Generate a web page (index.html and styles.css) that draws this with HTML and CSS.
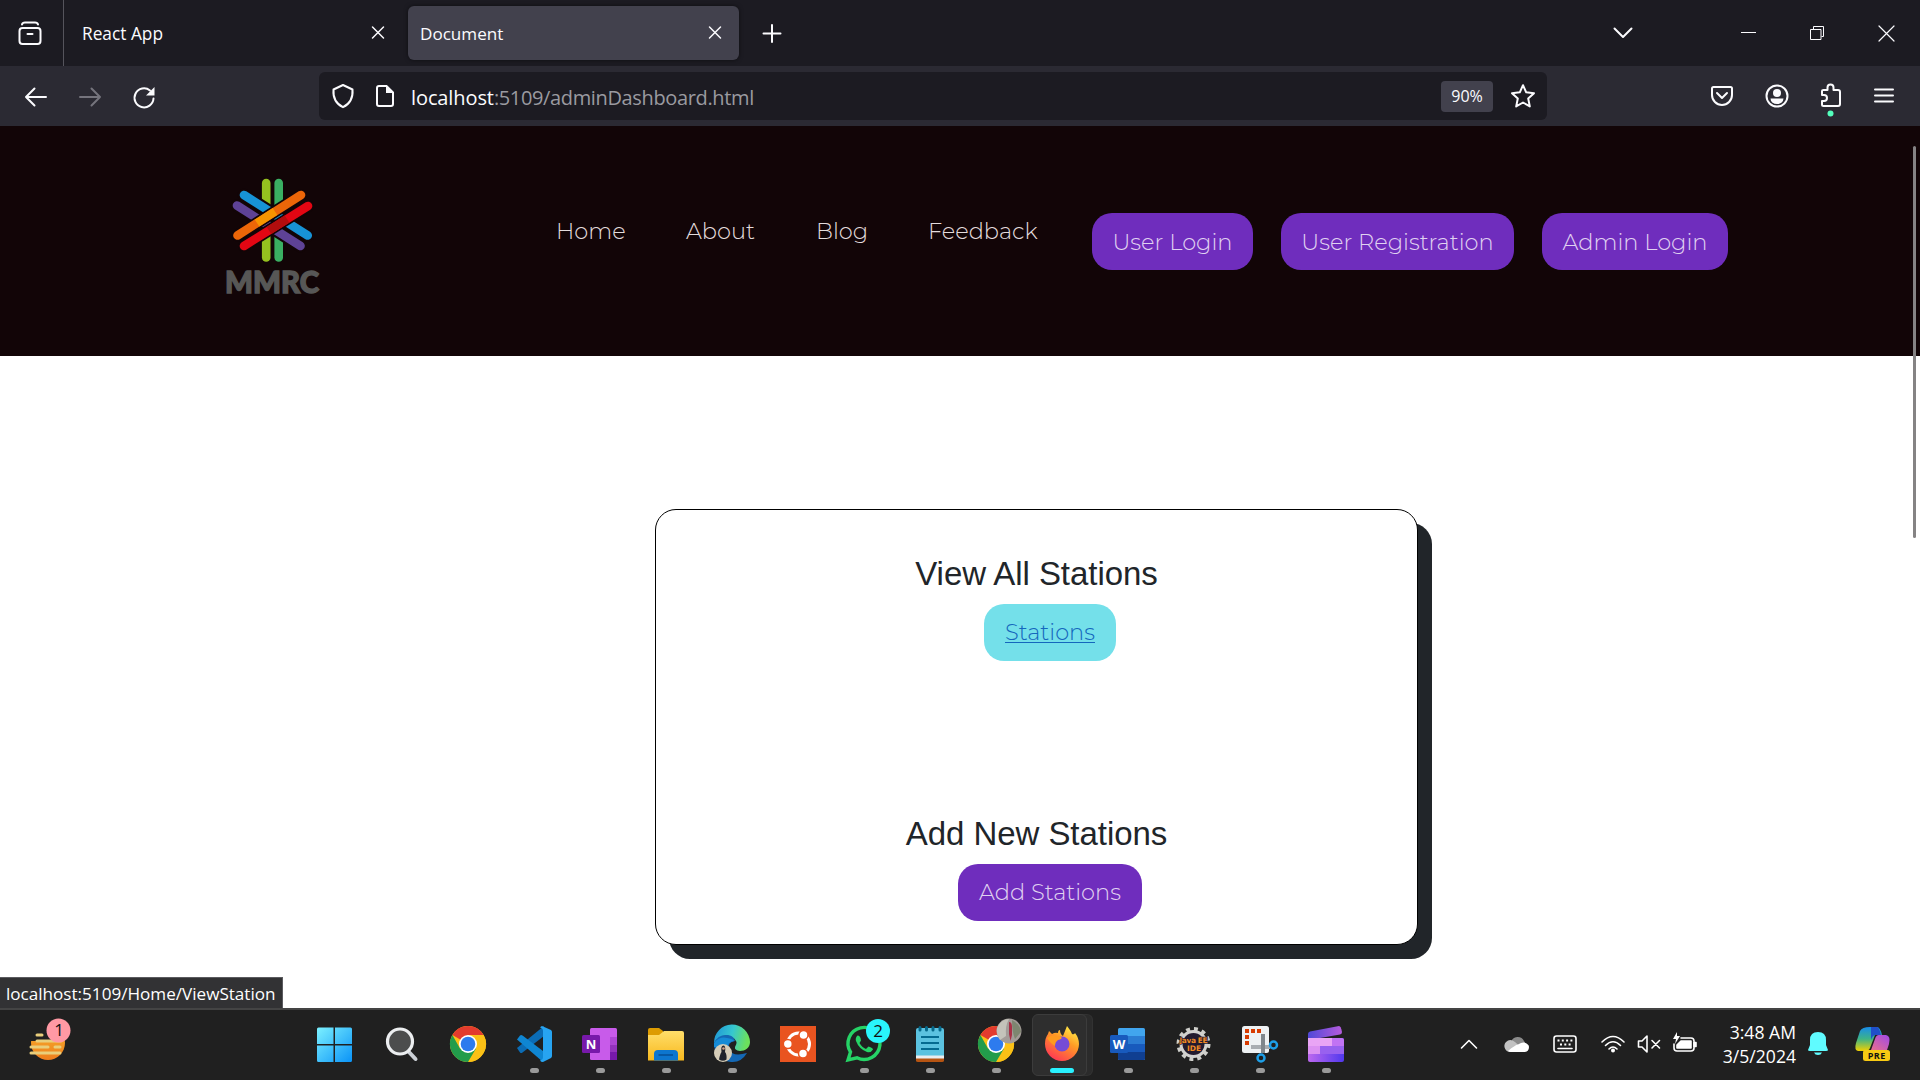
FILE: index.html
```html
<!DOCTYPE html>
<html lang="en">
<head>
<meta charset="utf-8">
<title>Document</title>
<link rel="stylesheet" href="styles.css">
</head>
<body>
<div class="tabstrip">
  <div class="view-btn">
    <svg width="26" height="26" viewBox="0 0 26 26" class="line"><path d="M5 5.500Q5.500 3.500 8 3.500H18Q20.500 3.500 21 5.500"/><rect x="2.500" y="9" width="21" height="16" rx="3"/><path d="M10.500 15h5"/></svg>
  </div>
  <div class="tab"><span>React App</span><svg width="14" height="14" viewBox="0 0 14 14" class="line thin"><path d="M1.500 1L12.500 12M12.500 1L1.500 12"/></svg></div>
  <div class="tab active"><span>Document</span><svg width="14" height="14" viewBox="0 0 14 14" class="line thin"><path d="M1.500 1L12.500 12M12.500 1L1.500 12"/></svg></div>
  <svg class="line plus" width="20" height="20" viewBox="0 0 20 20"><path d="M10 2V19M1.500 10.500H18.500"/></svg>
  <div class="window-controls">
    <svg width="20" height="12" viewBox="0 0 20 12" class="line"><path d="M1.500 1.500L10 10L18.500 1.500"/></svg>
    <svg width="16" height="16" viewBox="0 0 16 16" class="line hair"><path d="M0 7.500H15"/></svg>
    <svg width="16" height="16" viewBox="0 0 16 16" class="line hair"><path d="M.5 4.500h10.500v10h-10.500zM3.500 4V1.500H13.500V11.500H11.500"/></svg>
    <svg width="17" height="17" viewBox="0 0 17 17" class="line hair2"><path d="M1 1L16 16M16 1L1 16"/></svg>
  </div>
</div>
<div class="toolbar">
  <div class="nav-icons">
    <svg width="24" height="24" viewBox="0 0 24 24" class="line"><path d="M22 12H2M10.500 3.500L2 12L10.500 20.500"/></svg>
    <svg width="24" height="24" viewBox="0 0 24 24" class="line dim"><path d="M2 12H22M13.500 3.500L22 12L13.500 20.500"/></svg>
    <svg width="24" height="24" viewBox="0 0 24 24" class="line"><path d="M21.500 13.500A9.500 9.500 0 1 1 18 5.500"/><path d="M14 10.500H22.500V2Z" fill="#fbfbfe" stroke="none"/></svg>
  </div>
  <div class="urlbar">
    <svg width="24" height="26" viewBox="0 0 24 26" class="line"><path d="M12 2L21.500 6.500Q22.500 19 12 24.200Q1.500 19 2.500 6.500Z"/></svg>
    <svg class="page-icon" width="20" height="24" viewBox="0 0 20 24"><path d="M4 2H11.500L18 8.500V20Q18 22 16 22H4Q2 22 2 20V4Q2 2 4 2Z" fill="none" stroke="#fbfbfe" stroke-width="2"/><path d="M11 2V9H18Z" fill="#fbfbfe"/></svg>
    <span class="url"><b>localhost</b><span class="path">:5109/adminDashboard.html</span></span>
    <span class="zoom">90%</span>
    <svg width="26" height="26" viewBox="0 0 26 26" class="line"><path d="M13 2.200L16.200 9.300L24 10.200L18.200 15.500L19.800 23.400L13 19.500L6.200 23.400L7.800 15.500L2 10.200L9.800 9.300Z"/></svg>
  </div>
  <div class="tools">
    <svg width="24" height="22" viewBox="0 0 24 22" class="line"><path d="M3.500 2H20.500Q22 2 22 3.500V10A10 10 0 0 1 2 10V3.500Q2 2 3.500 2Z"/><path d="M7 8L12 13L17 8"/></svg>
    <svg width="24" height="24" viewBox="0 0 24 24" class="line"><circle cx="12" cy="12" r="10.500"/><g fill="#fbfbfe" stroke="none"><circle cx="12" cy="9" r="4"/><path d="M5.500 14.500H18.500A6.500 5.500 0 0 1 5.500 14.500Z"/></g></svg>
    <svg width="24" height="34" viewBox="0 0 24 34" class="line"><path d="M3 10V8Q3 7 4.500 7H8.500V4.500A3 3 0 0 1 14.500 4.500V7H19Q21 7 21 9V21Q21 23 19 23H4.500Q3 23 3 21.500V18H5A3 3 0 0 0 5 12H3Z"/><circle cx="11.500" cy="30.500" r="3" fill="#54ffbd" stroke="none"/></svg>
    <svg width="20" height="16" viewBox="0 0 20 16" class="line"><path d="M1 1.500H19M1 7.500H19M1 13.500H19"/></svg>
  </div>
</div>
<main class="page">
  <header class="site-header">
    <svg class="logo" width="98" height="120" viewBox="0 0 98 120">
      <g fill="none" stroke-width="8.600" stroke-linecap="round" transform="translate(-1 0)">
        <path d="M42.200 9V83.500" stroke="#95c11f"/><path d="M54.700 9V83.500" stroke="#3aaf62"/>
        <path d="M20 21L83.700 61.500" stroke="#120507" stroke-width="13"/><path d="M13 31.500L76.500 72" stroke="#120507" stroke-width="13"/>
        <path d="M20 21L83.700 61.500" stroke="#1793d6"/><path d="M13 31.500L76.500 72" stroke="#5e4296"/>
        <path d="M13.500 61.500L77 21" stroke="#120507" stroke-width="12"/><path d="M20 72L84 32" stroke="#120507" stroke-width="12"/>
        <path d="M13.500 61.500L77 21" stroke="#ec6608"/><path d="M20 72L84 32" stroke="#e30613"/>
        <path d="M33 49L51 37.500" stroke="#f79400" stroke-linecap="butt"/><path d="M45 56.500L63 45" stroke="#b20d0d" stroke-linecap="butt"/>
      </g>
      <text x="0" y="118.500" textLength="94" lengthAdjust="spacingAndGlyphs" class="logo-text">MMRC</text>
    </svg>
    <nav class="site-nav">
      <a>Home</a><a>About</a><a>Blog</a><a>Feedback</a>
    </nav>
    <div class="logins">
      <a class="btn b1">User Login</a><a class="btn b2">User Registration</a><a class="btn b3">Admin Login</a>
    </div>
  </header>
  <section class="card">
    <div class="group"><h2>View All Stations</h2><a class="btn stations">Stations</a></div>
    <div class="group"><h2>Add New Stations</h2><a class="btn add">Add Stations</a></div>
  </section>
  <div class="scrollbar"></div>
  <div class="status">localhost:5109/Home/ViewStation</div>
</main>
<footer class="taskbar">
  <svg class="weather" width="44" height="48" viewBox="0 0 44 48">
    <defs><linearGradient id="w" x2="0" y2="1"><stop stop-color="#f7b52e"/><stop offset="1" stop-color="#ee7d1d"/></linearGradient></defs>
    <circle cx="20" cy="26" r="17" fill="url(#w)"/><path d="M0 0H38V16L22 24H0Z" fill="#202020"/>
    <g stroke="#e9ce7b" stroke-width="3" stroke-linecap="round"><path d="M9 18H14M9 24H33M3 30H20M27 30H32M3 36H32"/></g>
    <circle cx="30.500" cy="13.500" r="12" fill="#ff99a4"/><text x="31" y="19.300" text-anchor="middle" class="badge-text">1</text>
  </svg>
  <div class="apps">
    <div class="app nodot"><svg viewBox="0 0 36 36"><defs><linearGradient id="win" x2="1" y2="1"><stop stop-color="#7cf1ff"/><stop offset="1" stop-color="#0a93f7"/></linearGradient></defs><path fill="url(#win)" d="M-1 3q0-1.500 1.500-1.500H15.500V18H-1zM17 1.500H32.500Q34 1.500 34 3V18H17zM-1 19.500H15.500V36H.5Q-1 36-1 34.500zM17 19.500H34V34.500Q34 36 32.500 36H17z"/></svg></div>
    <div class="app nodot"><svg viewBox="0 0 36 36"><path d="M24 25L31.500 33" stroke="#ccd0d6" stroke-width="4" stroke-linecap="round"/><circle cx="16" cy="15.500" r="12.500" fill="#4c4d4d" stroke="#eceef0" stroke-width="3.200"/></svg></div>
    <div class="app nodot"><svg viewBox="0 0 36 36"><g id="chrome"><circle cx="18" cy="18" r="18" fill="#fbc116"/><path d="M18 18L2.400 9A18 18 0 0 1 33.600 9Z" fill="#e33b2e"/><path d="M18 9H33.600A18 18 0 0 1 18 36L26 22Z" fill="#fbc116"/><path d="M2.400 9A18 18 0 0 0 18 36L26 22.500L10 22.500Z" fill="#229c4b"/><circle cx="18" cy="18" r="9" fill="#fff"/><circle cx="18" cy="18" r="7.300" fill="#2d7bee"/></g></svg></div>
    <div class="app"><svg viewBox="0 0 36 36"><path d="M1 22L4 26.500Q5 27.500 6.500 26.500L28 10V0Z" fill="#0b6cb5"/><path d="M1 13.500L4 9.500Q5 8.500 6.500 9.500L27 25V36Z" fill="#0f86d2"/><path d="M26 0L35 4Q36 5 36 6V30Q36 31 35 32L27 36Q25 36 24 34.500Q27 34 27 31V5Q27 2 24 1.500Q25 0 26 0Z" fill="#27a4f1"/></svg></div>
    <div class="app"><svg viewBox="0 0 36 36"><rect x="8" y="2" width="27" height="32" rx="1.500" fill="#c85bea"/><path d="M28 11H35V19H28z" fill="#ad46d4"/><path d="M28 19H35V26H28z" fill="#9333bd"/><path d="M28 26H35V34H28z" fill="#7719aa"/><rect y="9" width="18" height="18" rx="1.500" fill="#7719aa"/><text x="9" y="22.500" text-anchor="middle" class="office">N</text></svg></div>
    <div class="app"><svg viewBox="0 0 36 36"><defs><linearGradient id="f" x2="0" y2="1"><stop stop-color="#ffde6a"/><stop offset="1" stop-color="#f8b91e"/></linearGradient></defs><path d="M0 4Q0 2 2 2H11L15 5V12H0Z" fill="#dd9c02"/><path d="M0 9H11L16 5H34Q36 5 36 7V34.500H0Z" fill="url(#f)"/><path d="M6 34.500V28Q6 24 10 24H26Q30 24 30 28V34.500Z" fill="#0d76cf"/><path d="M10.500 29H25" stroke="#0755a0" stroke-width="1.800"/></svg></div>
    <div class="app"><svg viewBox="0 0 36 36"><defs><linearGradient id="e" x2="1" y2=".2"><stop stop-color="#1d93d8"/><stop offset=".55" stop-color="#36c7cf"/><stop offset="1" stop-color="#6ce05c"/></linearGradient></defs><path d="M0 17A18 18 0 0 1 36 16C36 22 31 25 26 25Q20 24 21 21Q25 15 18 11Q8 6 0 17Z" fill="url(#e)"/><path d="M0 17Q4 8 14 9Q20 10 21 15Q13 16 15 24Q19 31 33 27Q27 37 17 36Q0 34 0 17Z" fill="#1468b5"/><path d="M0 17Q6 10 13 12Q19 13 20 15Q13 16 14 22L0 21Z" fill="#168bd6"/><circle cx="9" cy="27" r="9" fill="#d6cdb8"/><path d="M5 33.500Q6 28 7.500 26Q6.500 19.500 9.500 19.500Q12 20 11 26Q13 28 12.500 33.500Q9 36 5 33.500Z" fill="#20232b"/><circle cx="9.500" cy="22.500" r="1.300" fill="#d0a089"/></svg></div>
    <div class="app nodot"><svg viewBox="0 0 36 36"><path d="M0 0H36V36H0Z" fill="#e95420"/><circle cx="18.500" cy="18" r="11" fill="none" stroke="#fff" stroke-width="3"/><g fill="#fff" stroke="#e95420" stroke-width="1.500"><circle cx="7.800" cy="18" r="4.500"/><circle cx="23.500" cy="9" r="4.500"/><circle cx="23" cy="27.500" r="4.500"/></g></svg></div>
    <div class="app"><svg viewBox="0 0 36 36"><path d="M2 34L4.500 26A16 16 0 1 1 11 31.800Z" fill="none" stroke="#25d366" stroke-width="3.400"/><path d="M11.500 9.500Q9 12 10 15Q13 23 21 26Q25 27 27 23.500Q27 22 22.500 20.500L20 23Q16 21.500 13.500 17L15 14.500Q14.500 9.500 11.500 9.500Z" fill="#25d366"/><circle cx="32" cy="5" r="12" fill="#29f5fc"/><text x="32" y="11" text-anchor="middle" class="badge-text">2</text></svg></div>
    <div class="app"><svg viewBox="0 0 36 36"><path d="M4 31H32V34.500Q32 36 30 36H6Q4 36 4 34.500Z" fill="#b65412"/><path d="M4 28H32V32.500H4Z" fill="#e9edf0"/><path d="M4 4Q4 2 6 2H30Q32 2 32 4V29.500H4Z" fill="#5bc2e0"/><path d="M9 11H27M9 17H27M9 23H27" stroke="#046b91" stroke-width="2"/><path d="M8 1.500V4M14.500 1.500V4M21 1.500V4M28 1.500V4" stroke="#05698b" stroke-width="3" stroke-linecap="round"/></svg></div>
    <div class="app"><svg viewBox="0 0 36 36"><use href="#chrome"/><circle cx="31" cy="5" r="12.500" fill="#a39c98"/><path d="M19 2Q23-7 31-7Q27 0 28 10L22 14Q18 8 19 2Z" fill="#c4c3ba"/><path d="M34-6Q42-2 43 6L37 13Q34 6 34-6Z" fill="#7d8670"/><path d="M31-4Q34-4 34 1L34 9L32.500 15L31 8Z" fill="#aa3147"/></svg></div>
    <div class="app current"><svg viewBox="0 0 36 36"><defs><linearGradient id="ff" x1=".8" y1="0" x2=".2" y2="1"><stop stop-color="#fff04a"/><stop offset=".4" stop-color="#ff9a25"/><stop offset="1" stop-color="#ff3058"/></linearGradient></defs><path d="M23 0Q27 5 28 8Q30 9 31 7Q35 12 35 18A17 17 0 0 1 1 18Q1 12 4 8L5 5L8 8Q11 6 14 7Q14 4 16 4Q16 8 19 10Q21 5 23 0Z" fill="url(#ff)"/><circle cx="18" cy="18" r="7.500" fill="#764bd6"/><path d="M3 12Q8 8 13 11Q17 10 18 12Q16 14 14 14Q11 16 11 20Q7 18 3 12Z" fill="#ff9a1f"/></svg></div>
    <div class="app"><svg viewBox="0 0 36 36"><rect x="8" y="2" width="27" height="32" rx="1.500" fill="#41a5ee"/><path d="M8 10H35V18H8z" fill="#2b7cd3"/><path d="M8 18H35V26H8z" fill="#185abd"/><path d="M8 26H35V32.500Q35 34 33.500 34H9.500Q8 34 8 32.500z" fill="#103f91"/><rect y="9" width="18" height="18" rx="1.500" fill="#185abd"/><text x="9" y="22.500" text-anchor="middle" class="office">W</text></svg></div>
    <div class="app"><svg viewBox="0 0 36 36"><circle cx="17.500" cy="18" r="15" fill="none" stroke="#cfcfcb" stroke-width="4" stroke-dasharray="3.900 3.954"/><circle cx="17.500" cy="18" r="12.500" fill="#221b2e" stroke="#d2d2cf" stroke-width="3"/><text x="17.500" y="16.500" text-anchor="middle" textLength="28" class="java">Java EE</text><text x="18" y="24.500" text-anchor="middle" class="java">IDE</text></svg></div>
    <div class="app"><svg viewBox="0 0 36 36"><rect width="27" height="27" rx="2.500" fill="#eef1f3"/><path d="M3 3h4v4h-4zM9 3h4v4h-4zM15 3h4v4h-4zM3 9h4v4h-4zM3 15h4v4h-4z" fill="#d83b01"/><path d="M9 21H28" stroke="#a9adb2" stroke-width="4"/><path d="M21 8V27" stroke="#7f868c" stroke-width="4"/><g fill="none" stroke="#1d9fe8" stroke-width="2.500"><circle cx="31.500" cy="19" r="3.500"/><circle cx="19" cy="32" r="3.500"/></g></svg></div>
    <div class="app"><svg viewBox="0 0 36 36"><defs><linearGradient id="c1" x2="1"><stop stop-color="#5048d8"/><stop offset="1" stop-color="#b55bdc"/></linearGradient><linearGradient id="c2" x2="1"><stop stop-color="#bd68ef"/><stop offset="1" stop-color="#5038ee"/></linearGradient></defs><path d="M0 8Q0 6 2 5.500L31 0Q33 0 34 6Q34 8 32 8.500L12 12H0Z" fill="url(#c1)"/><path d="M0 12H34Q36 12 36 14V34Q36 36 34 36H2Q0 36 0 34Z" fill="url(#c2)"/><path d="M0 12H24V20H0Z" fill="#e9a5f5"/><path d="M24 12H34Q36 12 36 14V20H24Z" fill="#c173f3"/><path d="M0 20H12V28H0Z" fill="#dc92f2"/><path d="M12 20H36V28H12Z" fill="#9861ef"/></svg></div>
  </div>
  <div class="tray">
    <svg width="18" height="12" viewBox="0 0 18 12" class="line tr"><path d="M1.500 10L9 2.500L16.500 10"/></svg>
    <svg width="24" height="24" viewBox="0 0 24 24"><path d="M6 10A7 7 0 0 1 19 9L22 14H4Z" fill="#8b8b8b"/><path d="M6 20A6 6 0 0 1 1 10Q5 6 10 10L20 19Z" fill="#c2c2c2"/><path d="M3 19Q10 13 13 12.500Q17 10 19 10.500Q24 12 24 15Q24 20 19 20H6Q4 20 3 19Z" fill="#fff"/></svg>
    <svg width="24" height="18" viewBox="0 0 24 18" class="line tr"><rect x="1" y="1" width="22" height="16" rx="2.500"/><path d="M4.500 5.500H20M7 9.500H18" stroke-linecap="butt" stroke-width="2" stroke-dasharray="2 2.300"/><path d="M5 13.500H19"/></svg>
    <svg width="24" height="24" viewBox="0 0 24 24" class="line tr"><path d="M1 10Q12-1 23 10M4.500 13.500Q12 6 19.500 13.500M8 17Q12 13 16 17"/><circle cx="12" cy="18.500" r="2" fill="#fff" stroke="none"/></svg>
    <svg width="24" height="20" viewBox="0 0 24 20" class="line tr"><path d="M1.500 7H5L10 2V18L5 13H1.500ZM15 6.500L22.500 14M22.500 6.500L15 14"/></svg>
    <svg width="26" height="24" viewBox="0 0 26 24" class="line tr"><path d="M9 6H19Q22 6 22 9V16Q22 19 19 19H5Q2 19 2 16V12"/><path d="M9 9H19V16H5V13ZM22 10.500H24V14.500H22Z" fill="#fff"/><path d="M5 0L1 7H4L3 12L8 4H5Z" fill="#fff" stroke="none"/></svg>
    <div class="clock"><span>3:48 AM</span><span>3/5/2024</span></div>
    <svg class="bell" width="20" height="24" viewBox="0 0 20 24"><path d="M10 0Q18 0 18 8V13L20 18Q20 19 18 19H2Q0 19 0 18L2 13V8Q2 0 10 0ZM6 20.500H14Q13 23 10 23Q7 23 6 20.500Z" fill="#60fbff"/></svg>
    <svg class="copilot" width="36" height="36" viewBox="0 0 36 36"><defs><linearGradient id="p1" x2="0" y2="1"><stop stop-color="#188cea"/><stop offset=".5" stop-color="#3eb486"/><stop offset="1" stop-color="#f3d000"/></linearGradient><linearGradient id="p2" x1="1" x2="0" y2="1"><stop stop-color="#a049e8"/><stop offset="1" stop-color="#ff7a70"/></linearGradient></defs><path d="M15 1H22Q25 1 27 9H20L15 22Q14 25 10 25H3Q-1 24 1 17L5 5Q7 1 15 1Z" fill="url(#p1)"/><path d="M16 1H22Q24 1 26 9H20Q17 10 16 14Z" fill="#204fc9"/><path d="M24 9H31Q36 10 34 18L31 27H8Q14 28 16 24L20 13Q21 9 24 9Z" fill="url(#p2)"/><rect x="8" y="24" width="27" height="11" rx="2.500" fill="#f8ca13"/><text x="21.800" y="33" text-anchor="middle" class="pre">PRE</text></svg>
  </div>
</footer>
</body>
</html>
```
FILE: styles.css
```css
* { box-sizing: border-box; }
body { margin: 0; width: 1920px; height: 1080px; overflow: hidden; display: flex; flex-direction: column; font-family: "Segoe UI", "Open Sans", sans-serif; background: #fff; color: #fbfbfe; }
svg { display: block; flex: none; overflow: visible; }
a, span, b { white-space: nowrap; }
.line { fill: none; stroke: #fbfbfe; stroke-width: 2; stroke-linecap: round; stroke-linejoin: round; }
.thin { stroke-width: 1.5; }
.hair { stroke-width: 1; stroke-linecap: butt; stroke-linejoin: miter; }
.hair2 { stroke-width: 1.2; }
.dim { stroke: #75747d; }
.tr { stroke: #fff; stroke-width: 1.6; }

.tabstrip { height: 66px; flex: none; background: #1c1b22; display: flex; align-items: center; }
.view-btn { width: 64px; height: 66px; border-right: 1px solid #55545c; padding: 19px 0 0 17px; }
.tab { width: 332px; height: 54px; margin-left: 12px; padding: 0 23px 0 6px; display: flex; align-items: center; justify-content: space-between; font-size: 17.3px; border-radius: 6px; }
.tab + .tab { margin-left: 0; }
.tab.active { background: #42414d; padding: 0 17px 0 12px; box-shadow: 0 0 4px #0008; width: 331px; font-size: 17.1px; }
.plus { margin-left: 23px; }
.window-controls { margin-left: auto; padding-right: 25px; display: flex; align-items: center; }
.window-controls svg:nth-child(2) { margin-left: 108px; }
.window-controls svg:nth-child(3) { margin-left: 53px; }
.window-controls svg:nth-child(4) { margin-left: 52px; }

.toolbar { height: 60px; flex: none; background: #2b2a33; display: flex; align-items: center; padding: 0 26px 0 24px; }
.nav-icons { display: flex; gap: 30px; width: 295px; padding-top: 2px; }
.urlbar { width: 1228px; height: 48px; background: #1c1b22; border-radius: 6px; display: flex; align-items: center; padding: 0 11px 0 12px; }
.page-icon { margin-left: 20px; }
.url { margin-left: 16px; font-size: 20px; color: #9a9aa0; flex: 1; display: flex; padding-top: 2px; }
.url b { font-weight: 400; color: #fbfbfe; letter-spacing: -.1px; }
.path { letter-spacing: -.36px; }
.zoom { width: 52px; height: 31px; margin-right: 17px; border-radius: 4px; background: #42414d; font-size: 16px; display: grid; place-items: center; }
.tools { margin-left: auto; display: flex; align-items: center; }
.tools svg:nth-child(2) { margin-left: 31px; }
.tools svg:nth-child(3) { margin: 7px 0 0 30px; }
.tools svg:nth-child(4) { margin-left: 31px; }

.page { height: 882px; flex: none; position: relative; }
.site-header { height: 230px; background: #120507; display: flex; align-items: flex-start; font-family: Montserrat, Inter, sans-serif; font-weight: 300; font-size: 22.5px; line-height: 26px; color: #e3dcdd; }
.logo { margin: 48px 0 0 225px; }
.logo-text { font: 900 30.5px Lato, sans-serif; fill: #575756; stroke: #575756; stroke-width: 1.4; }
.site-nav { margin: 92px 0 0 233px; display: grid; grid-template-columns: 130px 130px 112px 164px; }
.logins { display: flex; gap: 28px; margin-top: 87px; }
.btn { display: block; height: 57px; line-height: 58px; border-radius: 20px; background: #6f2dbd; color: #e0d2f1; text-align: center; font-family: Montserrat, Inter, sans-serif; font-weight: 300; font-size: 22.5px; }
.b1 { width: 161px; }
.b2 { width: 233px; }
.b3 { width: 186px; }
.card { width: 763px; height: 436px; margin: 153px 0 0 655px; border: 1px solid #000; border-radius: 21px; background: #fff; box-shadow: 14px 14px 0 #212529; padding-top: 45px; display: flex; flex-direction: column; gap: 154px; color: #212529; }
.group { display: flex; flex-direction: column; align-items: center; }
h2 { margin: 0 0 11px; font: 400 33px/38px "Liberation Sans", Arial, sans-serif; letter-spacing: -.05px; }
.group .btn { margin-left: 27px; line-height: 56px; }
.stations { width: 132px; background: #74e0ea; color: #1467bd; text-decoration: underline; text-decoration-thickness: 1px; text-underline-offset: 2px; }
.add { width: 184px; }
.scrollbar { position: absolute; left: 1913px; top: 20px; width: 3px; height: 392px; background: #858384; border-radius: 2px; }
.status { position: absolute; left: 0; bottom: 0; width: 283px; height: 31px; background: #323234; border: 1px solid #5b5b5f; border-width: 1px 1px 0 0; padding-left: 6px; font-size: 17.1px; line-height: 31px; color: #fff; white-space: nowrap; }

.taskbar { height: 72px; flex: none; background: #202020; border-top: 2px solid #444; display: flex; align-items: flex-start; color: #fff; }
.weather { margin: 7px 0 0 28px; }
.apps { display: flex; margin: 4px 0 0 231px; }
.app { width: 66px; height: 60px; padding: 12px 15px 0; position: relative; }
.app svg { width: 36px; height: 36px; }
.app::after { content: ""; display: block; width: 9px; height: 5px; border-radius: 3px; background: #9a9a9a; margin: 6px auto 0; }
.nodot::after { display: none; }
.current svg { position: relative; z-index: 1; }
.current::after { width: 24px; background: #29f1ff; position: relative; z-index: 1; }
.current::before { content: ""; position: absolute; left: 3px; top: 0; width: 53px; height: 60px; border-radius: 6px; background: #2e2e2e; border: 1px solid #3c3c3c; box-shadow: 6px 0 0 -1px #2b2b2b, 6px 0 0 0 #323232; }
.badge-text { font: 17px "Open Sans", sans-serif; fill: #111; }
.office { font: 700 13px "Open Sans", sans-serif; fill: #fff; }
.java { font: 700 7.5px "DejaVu Sans", sans-serif; fill: #f08a24; stroke: #221b2e; stroke-width: 1.5; paint-order: stroke; }
.pre { font: 700 9px "Open Sans", sans-serif; fill: #111; letter-spacing: .5px; }
.tray { margin-left: 101px; height: 68px; display: flex; align-items: center; }
.tray svg:nth-child(2) { margin-left: 27px; }
.tray svg:nth-child(3) { margin-left: 24px; }
.tray svg:nth-child(4) { margin-left: 24px; }
.tray svg:nth-child(5) { margin-left: 12px; }
.tray svg:nth-child(6) { margin-left: 11px; }
.clock { width: 98px; padding-bottom: 1px; font-size: 17.6px; line-height: 24px; display: flex; flex-direction: column; align-items: flex-end; }
.tray .bell { margin-left: 12px; }
.tray .copilot { margin-left: 27px; }
```
